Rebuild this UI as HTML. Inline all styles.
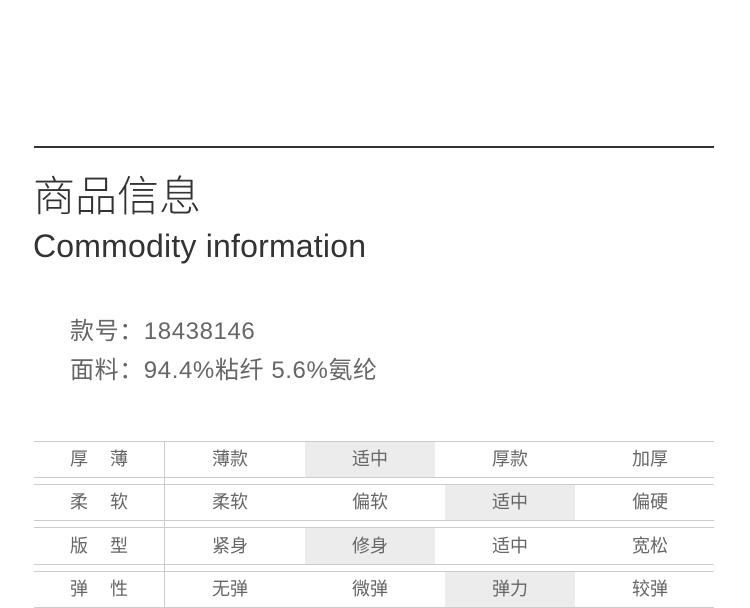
<!DOCTYPE html>
<html><head><meta charset="utf-8"><style>
body{margin:0;width:750px;height:608px;background:#fff;position:relative;overflow:hidden;font-family:"Liberation Sans","Noto Sans CJK SC",sans-serif}
.a{position:absolute;white-space:nowrap}
.hl{position:absolute;background:#ececec}
.hr{position:absolute;left:34px;width:680px;height:1px;background:#ccc}
.t{position:absolute;width:130px;text-align:center;font-size:18px;color:#666;line-height:36px}
.l{letter-spacing:2px}
</style></head><body>
<div class="a" style="left:34px;top:146px;width:680px;height:2px;background:#333"></div>
<div class="a" style="left:33px;top:173px;font-size:42px;color:#333;font-weight:300;line-height:48px">商品信息</div>
<div class="a" style="left:33px;top:227px;font-size:32px;color:#333;letter-spacing:0.2px;line-height:38px">Commodity information</div>
<div class="a" style="left:70px;top:317px;font-size:24px;color:#666;line-height:30px;letter-spacing:0.6px">款号：18438146</div>
<div class="a" style="left:70px;top:356px;font-size:24px;color:#666;line-height:30px;letter-spacing:0.6px">面料：94.4%粘纤 5.6%氨纶</div>

<div class="hl" style="left:305px;top:442px;width:130px;height:35px"></div>
<div class="hl" style="left:445px;top:485px;width:130px;height:35px"></div>
<div class="hl" style="left:305px;top:528px;width:130px;height:36px"></div>
<div class="hl" style="left:445px;top:572px;width:130px;height:35px"></div>

<div class="hr" style="top:441px"></div><div class="hr" style="top:477px"></div>
<div class="hr" style="top:484px"></div><div class="hr" style="top:520px"></div>
<div class="hr" style="top:527px"></div><div class="hr" style="top:564px"></div>
<div class="hr" style="top:571px"></div><div class="hr" style="top:607px"></div>
<div class="a" style="left:164px;top:441px;width:1px;height:167px;background:#ccc"></div>

<div class="t l" style="left:35px;top:441px">厚　薄</div><div class="t" style="left:165px;top:441px">薄款</div><div class="t" style="left:305px;top:441px">适中</div><div class="t" style="left:445px;top:441px">厚款</div><div class="t" style="left:585px;top:441px">加厚</div>
<div class="t l" style="left:35px;top:484px">柔　软</div><div class="t" style="left:165px;top:484px">柔软</div><div class="t" style="left:305px;top:484px">偏软</div><div class="t" style="left:445px;top:484px">适中</div><div class="t" style="left:585px;top:484px">偏硬</div>
<div class="t l" style="left:35px;top:528px">版　型</div><div class="t" style="left:165px;top:528px">紧身</div><div class="t" style="left:305px;top:528px">修身</div><div class="t" style="left:445px;top:528px">适中</div><div class="t" style="left:585px;top:528px">宽松</div>
<div class="t l" style="left:35px;top:571px">弹　性</div><div class="t" style="left:165px;top:571px">无弹</div><div class="t" style="left:305px;top:571px">微弹</div><div class="t" style="left:445px;top:571px">弹力</div><div class="t" style="left:585px;top:571px">较弹</div>
</body></html>
